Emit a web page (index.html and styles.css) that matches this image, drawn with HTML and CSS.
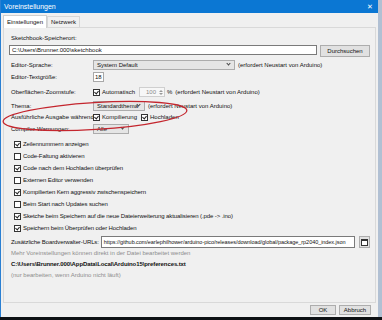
FILE: index.html
```html
<!doctype html>
<html lang="de">
<head>
    <meta charset="UTF-8">
    <title>Voreinstellungen</title>
    <link rel="stylesheet" href="styles.css">
</head>
<body>
    <div class="window">
        <div class="titlebar">
            <span class="title">Voreinstellungen</span>
            <span class="close">&#x2715;</span>
        </div>
        <div class="tabs">
            <div class="tab active">Einstellungen</div>
            <div class="tab">Netzwerk</div>
        </div>
        <div class="panel">
            <div class="caption">Sketchbook-Speicherort:</div>
            <div class="pathrow">
                <div class="field path">C:\Users\Brunner.000\sketchbook</div>
                <div class="btn browse">Durchsuchen</div>
            </div>

            <div class="row">
                <span class="label">Editor-Sprache:</span>
                <div class="select lang">System Default<i class="arrow"></i></div>
                <span class="note">(erfordert Neustart von Arduino)</span>
            </div>
            <div class="row">
                <span class="label">Editor-Textgröße:</span>
                <div class="field size">18</div>
            </div>
            <div class="row r-zoom">
                <span class="label">Oberflächen-Zoomstufe:</span>
                <span class="check on"></span><span class="opt">Automatisch</span>
                <div class="spinner">100<span class="spin"><i></i><i></i></span></div>
                <span class="pct">%</span>
                <span class="note">(erfordert Neustart von Arduino)</span>
            </div>
            <div class="row r-theme">
                <span class="label">Thema:</span>
                <div class="select theme">Standardthema<i class="arrow"></i></div>
                <span class="note">(erfordert Neustart von Arduino)</span>
            </div>
            <div class="row r-verbose">
                <span class="label">Ausführliche Ausgabe während:</span>
                <span class="check on"></span><span class="opt">Kompilierung</span>
                <span class="check on"></span><span class="opt">Hochladen</span>
            </div>
            <div class="row">
                <span class="label">Compiler-Warnungen:</span>
                <div class="select warn">Alle<i class="arrow"></i></div>
            </div>

            <ul class="checks">
                <li><span class="check on"></span>Zeilennummern anzeigen</li>
                <li><span class="check"></span>Code-Faltung aktivieren</li>
                <li><span class="check on"></span>Code nach dem Hochladen überprüfen</li>
                <li><span class="check"></span>Externen Editor verwenden</li>
                <li><span class="check on"></span>Kompilierten Kern aggressiv zwischenspeichern</li>
                <li><span class="check"></span>Beim Start nach Updates suchen</li>
                <li><span class="check on"></span>Sketche beim Speichern auf die neue Dateierweiterung aktualisieren (.pde -&gt; .ino)</li>
                <li><span class="check on"></span>Speichern beim Überprüfen oder Hochladen</li>
            </ul>

            <div class="urlrow">
                <span class="urllabel">Zusätzliche Boardverwalter-URLs:</span>
                <div class="field url">https://github.com/earlephilhower/arduino-pico/releases/download/global/package_rp2040_index.json</div>
                <div class="btn icon">
                    <svg width="7" height="7" viewBox="0 0 7 7">
                        <rect x="0.5" y="0.5" width="6" height="6" fill="#fff" stroke="#333"/>
                        <rect x="0.5" y="0.5" width="6" height="1.5" fill="#333"/>
                    </svg>
                </div>
            </div>

            <div class="info">
                <div class="muted">Mehr Voreinstellungen können direkt in der Datei bearbeitet werden</div>
                <div class="file">C:\Users\Brunner.000\AppData\Local\Arduino15\preferences.txt</div>
                <div class="muted">(nur bearbeiten, wenn Arduino nicht läuft)</div>
            </div>
        </div>
        <div class="footer">
            <div class="btn ok">OK</div>
            <div class="btn cancel">Abbruch</div>
        </div>

        <svg class="mark" width="382" height="320" viewBox="0 0 382 320">
            <ellipse cx="95" cy="116" rx="92" ry="13.5" transform="rotate(-3.5 95 116)"
                     fill="none" stroke="#c4262e" stroke-width="1.3"/>
        </svg>
    </div>
</body>
</html>
```

FILE: styles.css
```css
*{
    margin: 0;
    padding: 0;
    list-style: none;
    box-sizing: border-box;
}
html,body{
    width: 382px;
    height: 320px;
    overflow: hidden;
    background: #0e1114;
    font-family: "Liberation Sans", Arial, sans-serif;
    font-size: 6px;
    color: #111;
}
.window{
    position: relative;
    width: 382px;
    height: 317px;
    background: #f0f0f0;
    border-left: 1px solid #2a7fd2;
    border-right: 4px solid #b1c0d3;
    display: flex;
    flex-direction: column;
}

/* title + tabs */
.titlebar{
    height: 13px;
    background: #0b77d3;
    color: #fff;
    display: flex;
    align-items: center;
    justify-content: space-between;
    padding: 0 5px 0 3px;
    font-size: 7px;
}
.close{
    font-size: 7px;
}
.tabs{
    height: 14px;
    display: flex;
    align-items: flex-end;
    padding-left: 2px;
}
.tab{
    height: 11px;
    line-height: 10px;
    padding: 0 3px;
    border: 1px solid #d6d6d6;
    border-bottom: none;
    background: #f0f0f0;
}
.tab.active{
    height: 13px;
    line-height: 12px;
    background: #fff;
    border-color: #cfcfcf;
    margin-bottom: -1px;
    position: relative;
    z-index: 1;
}

/* main panel */
.panel{
    height: 276px;
    margin: 0 2px 0 2px;
    border: 1px solid #d9d9d9;
    padding: 6px 5px 0 7px;
    display: flex;
    flex-direction: column;
}
.caption{
    line-height: 8px;
}
.pathrow{
    display: flex;
    align-items: flex-start;
    height: 13px;
    margin-top: 2px;
}
.field{
    background: #fff;
    border: 1px solid #a8a8a8;
    white-space: nowrap;
    overflow: hidden;
}
.path{
    margin: 1px 0 0 -2px;
    width: 314px;
    height: 10px;
    line-height: 8px;
    padding-left: 2px;
    border-color: #7a7a7a;
}
.btn{
    background: #e1e1e1;
    border: 1px solid #adadad;
    display: flex;
    align-items: center;
    justify-content: center;
}
.browse{
    margin: 1px 0 0 3px;
    width: 51px;
    height: 12px;
}

.row{
    height: 12px;
    display: flex;
    align-items: center;
    margin-top: 2px;
}
.row + .row{
    margin-top: 0;
}
.row.r-zoom{ margin-top: 3px; }
.row.r-theme{ margin-top: 2px; }
.row.r-verbose{ margin-top: -1px; }
.label{
    width: 82px;
    flex: none;
    white-space: nowrap;
}
.note{
    margin-left: 3px;
    white-space: nowrap;
}
.select{
    position: relative;
    height: 10px;
    line-height: 8px;
    padding-left: 3px;
    background: #e5e5e5;
    border: 1px solid #acacac;
}
.select .arrow{
    position: absolute;
    right: 4px;
    top: 1px;
    width: 3px;
    height: 3px;
    border-right: 1px solid #444;
    border-bottom: 1px solid #444;
    transform: rotate(45deg);
}
.lang{ width: 142px; }
.theme{ width: 52px; }
.warn{ width: 36px; }
.size{
    width: 11px;
    height: 10px;
    line-height: 8px;
    padding-left: 1px;
}

.check{
    width: 7px;
    height: 7px;
    flex: none;
    border: 1px solid #333;
    background: #fff;
    position: relative;
}
.check.on::after{
    content: "";
    position: absolute;
    left: 1px;
    top: 0;
    width: 2px;
    height: 3px;
    border-right: 1px solid #222;
    border-bottom: 1px solid #222;
    transform: rotate(40deg);
}
.opt{
    margin: 0 4px 0 2px;
}
.spinner{
    width: 26px;
    height: 10px;
    line-height: 8px;
    border: 1px solid #cfcfcf;
    background: #f7f7f7;
    color: #8a8a8a;
    display: flex;
    justify-content: flex-end;
    padding-right: 1px;
}
.spin{
    display: flex;
    flex-direction: column;
    justify-content: center;
    gap: 1px;
    margin-left: 3px;
}
.spin i{
    width: 0;
    height: 0;
    border-left: 2px solid transparent;
    border-right: 2px solid transparent;
    border-bottom: 2px solid #999;
}
.spin i + i{
    border-bottom: none;
    border-top: 2px solid #999;
}
.pct{
    margin-left: 2px;
}

.checks{
    margin-top: 3px;
}
.checks li{
    height: 12px;
    display: flex;
    align-items: center;
    padding-left: 3px;
    white-space: nowrap;
    letter-spacing: -0.1px;
}
.checks .check{
    margin-right: 2px;
}

.urlrow{
    height: 12px;
    margin-top: 2px;
    display: flex;
    align-items: center;
}
.urllabel{
    flex: none;
    white-space: nowrap;
    margin-right: 2px;
    letter-spacing: -0.1px;
}
.url{
    flex: 1;
    height: 12px;
    line-height: 10px;
    padding-left: 2px;
    border-color: #7a7a7a;
    font-size: 5.5px;
    letter-spacing: -0.05px;
}
.icon{
    flex: none;
    width: 11px;
    height: 12px;
    margin-left: 4px;
}

.info{
    line-height: 11px;
}
.muted{
    color: #8d8d8d;
}
.file{
    color: #111;
    font-weight: bold;
    letter-spacing: -0.1px;
}

.footer{
    display: flex;
    justify-content: flex-end;
    gap: 3px;
    padding: 2px 7px 0 0;
}
.ok{
    width: 26px;
    height: 10px;
}
.cancel{
    width: 32px;
    height: 10px;
}

.mark{
    position: absolute;
    left: -1px;
    top: 0;
    pointer-events: none;
}
```
